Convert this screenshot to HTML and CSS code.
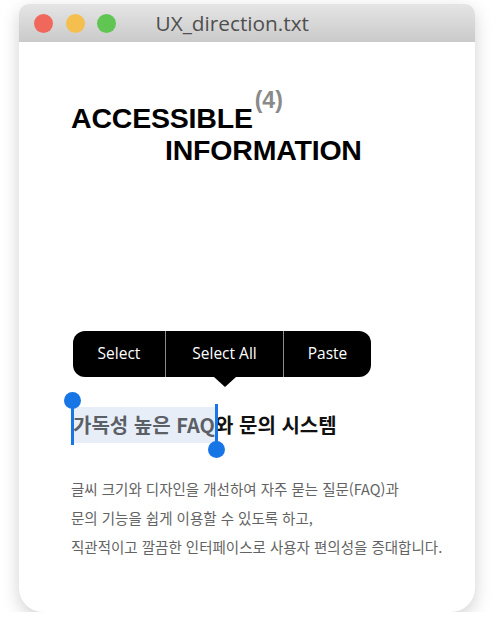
FILE: index.html
```html
<!DOCTYPE html>
<html lang="ko">
<head>
    <meta charset="UTF-8">
    <meta name="viewport" content="width=device-width, initial-scale=1.0">
    <title>UX_direction.txt</title>
    <link rel="stylesheet" href="styles.css">
</head>
<body>
    <div class="window">
        <div class="titlebar">
            <span class="dot red"></span>
            <span class="dot yellow"></span>
            <span class="dot green"></span>
            <span class="filename">UX_direction.txt</span>
        </div>
        <div class="content">
            <h1 class="headline">
                <span class="line-one">ACCESSIBLE<sup>(4)</sup></span>
                <span class="line-two">INFORMATION</span>
            </h1>

            <div class="menu">
                <button>Select</button>
                <button>Select All</button>
                <button>Paste</button>
            </div>

            <h2 class="subject">
                <span class="selected">가독성 높은 FAQ<span class="handle start"></span><span class="handle end"></span></span>와 문의 시스템
            </h2>

            <p class="desc">
                글씨 크기와 디자인을 개선하여 자주 묻는 질문(FAQ)과<br>
                문의 기능을 쉽게 이용할 수 있도록 하고,<br>
                직관적이고 깔끔한 인터페이스로 사용자 편의성을 증대합니다.
            </p>
        </div>
    </div>
</body>
</html>
```

FILE: styles.css
```css
body {
    margin: 0;
    background-color: #ffffff;
    font-family: "Noto Sans", "Noto Sans CJK KR", sans-serif;
}
.window {
    width: 456px;
    height: 608px;
    margin: 4px 0 0 19px;
    background-color: #ffffff;
    border-radius: 10px 10px 24px 24px;
    box-shadow: 0 6px 18px rgba(0, 0, 0, 0.18);
    overflow: hidden;
}
.titlebar {
    height: 38px;
    display: flex;
    align-items: center;
    padding-left: 15px;
    background: linear-gradient(#e5e5e5, #cacaca);
}
.dot {
    width: 19px;
    height: 19px;
    border-radius: 50%;
    margin-right: 12.5px;
}
.red { background-color: #f0685c; }
.yellow { background-color: #f5bf4f; }
.green { background-color: #61c554; }
.filename {
    margin-left: 27px;
    font-family: "Open Sans", sans-serif;
    font-size: 20.8px;
    color: #4f4f4f;
}
.content {
    padding: 60px 0 0 52px;
}
.headline {
    margin: 0;
    font-family: "Liberation Sans", Arial, sans-serif;
    font-size: 28.5px;
    font-weight: bold;
    line-height: 32px;
    letter-spacing: -0.2px;
    color: #000000;
}
.headline span {
    display: block;
}
/* superscript count, nudged up without growing the line */
.headline sup {
    position: relative;
    top: -20px;
    vertical-align: baseline;
    line-height: 0;
    font-size: 23px;
    color: #8a8a8a;
    letter-spacing: 0;
    margin-left: 2px;
}
.line-two {
    padding-left: 94px;
}
.menu {
    position: relative;
    display: flex;
    width: 298px;
    height: 46px;
    margin: 165px 0 0 2px;
    background-color: #000000;
    border-radius: 12px;
}
.menu::after {
    content: "";
    position: absolute;
    left: 141px;
    bottom: -10px;
    border-left: 11px solid transparent;
    border-right: 11px solid transparent;
    border-top: 10px solid #000000;
}
.menu button {
    border: none;
    background: none;
    color: #ffffff;
    font-family: "Open Sans", sans-serif;
    font-size: 15.5px;
    padding: 0 0 2px 0;
    cursor: pointer;
}
.menu button:nth-child(1) { width: 92px; }
.menu button:nth-child(2) { width: 119px; border-left: 1px solid #8a8a8a; border-right: 1px solid #8a8a8a; }
.menu button:nth-child(3) { flex: 1; }
.subject {
    margin: 30px 0 0 2px;
    font-family: "Noto Sans CJK KR", sans-serif;
    font-size: 20px;
    font-weight: bold;
    line-height: 36px;
    color: #111111;
    letter-spacing: 0;
}
.selected {
    position: relative;
    display: inline-block;
    background-color: #e8eef8;
    color: #5b5f66;
}
.handle {
    position: absolute;
    width: 3px;
    background-color: #1875e6;
}
.handle::before {
    content: "";
    position: absolute;
    left: -7px;
    width: 17px;
    height: 17px;
    border-radius: 50%;
    background-color: #1875e6;
}
.handle.start {
    left: -2px;
    top: -8px;
    height: 46px;
}
.handle.start::before { top: -7px; }
.handle.end {
    right: -3px;
    top: -3px;
    height: 45px;
}
.handle.end::before { bottom: -9px; }
.desc {
    margin: 31px 0 0 0;
    font-family: "Noto Sans CJK KR", sans-serif;
    font-size: 14.5px;
    line-height: 29px;
    color: #636363;
    letter-spacing: 0;
}
```
